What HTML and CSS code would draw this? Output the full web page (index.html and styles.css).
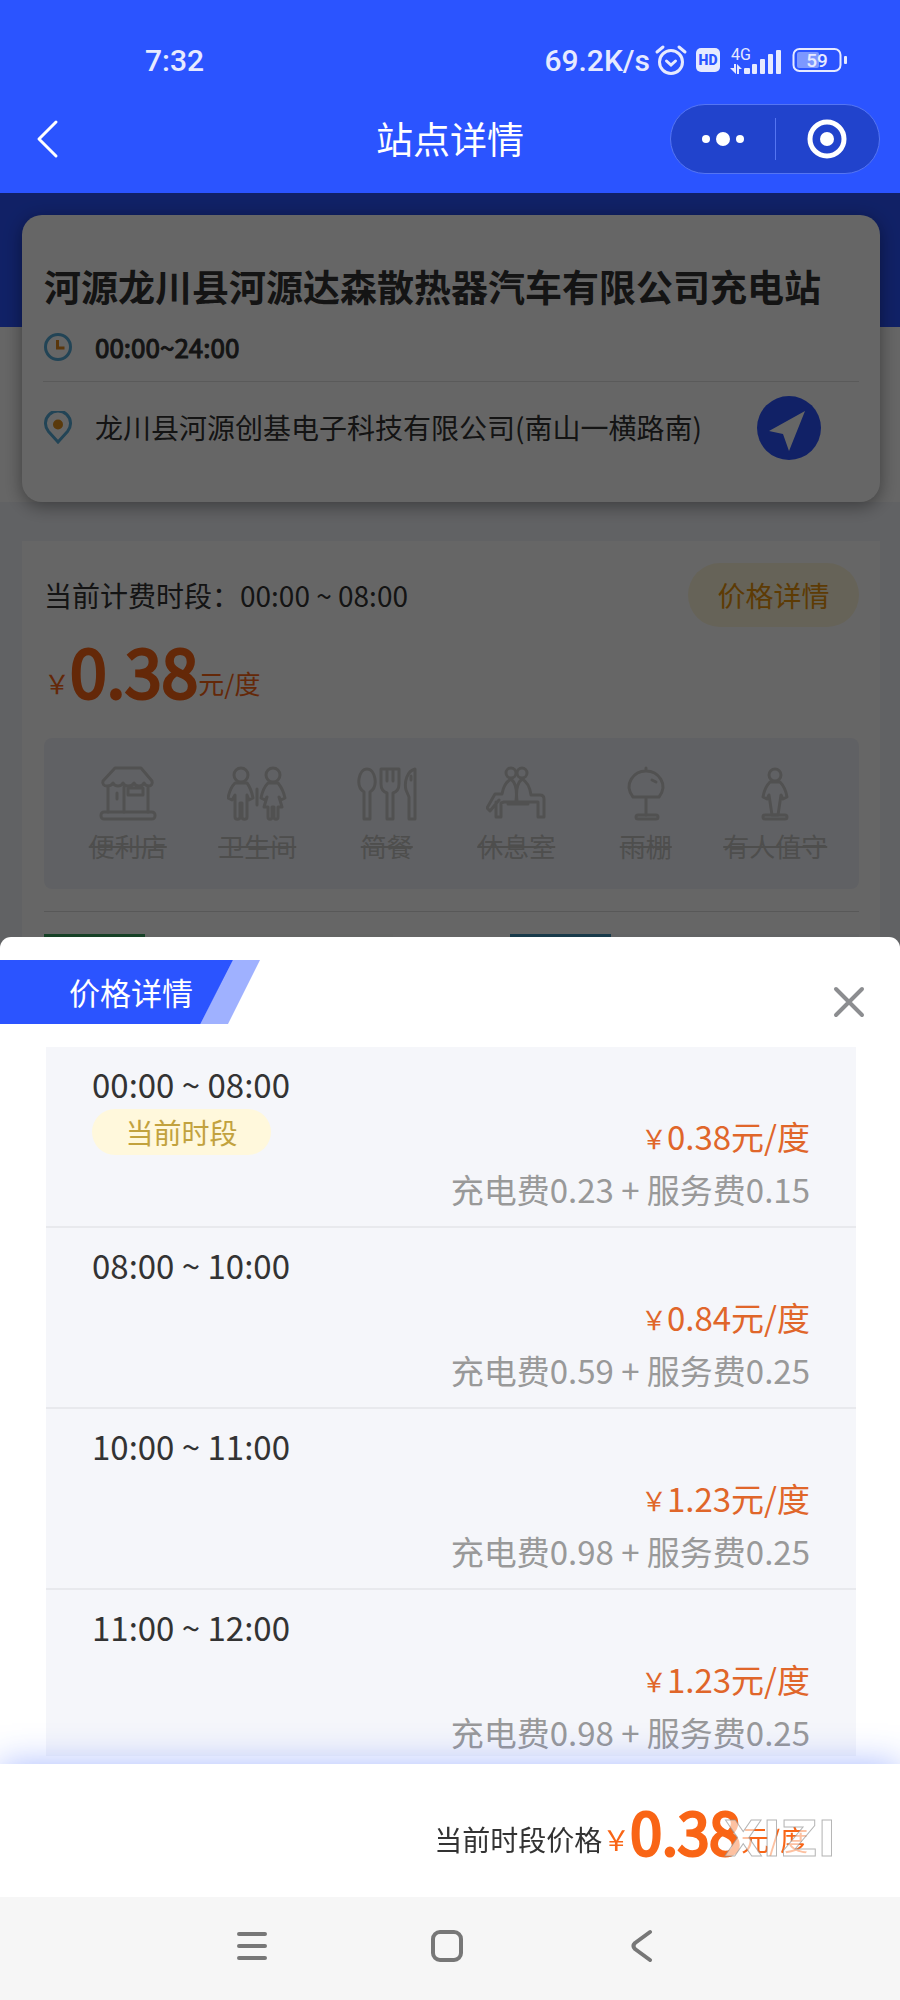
FILE: index.html
```html
<!DOCTYPE html>
<html lang="zh-CN">
<head>
    <meta charset="UTF-8">
    <meta name="viewport" content="width=device-width, initial-scale=1">
    <title>站点详情</title>
    <link rel="stylesheet" href="styles.css">
</head>
<body>

<div class="app">
    <header class="header">
        <div class="status-bar">
            <span>7:32</span>
            <div class="status-icons">
                <span>69.2K/s</span>
                <svg class="alarm" width="34" height="32" viewBox="0 0 34 32" fill="none" stroke="#e6eaff" stroke-width="3" stroke-linecap="round">
                    <circle cx="17" cy="18" r="11.500"/>
                    <path d="M12.500 17l4.500 4 4.500-4M3 8l6-5M31 8l-6-5"/>
                </svg>
                <svg class="hd" width="24" height="24" viewBox="0 0 24 24">
                    <rect width="24" height="24" rx="5" fill="#e6eaff"/>
                    <text x="12" y="17" text-anchor="middle" class="hd-text">HD</text>
                </svg>
                <svg class="signal" width="52" height="32" viewBox="0 0 52 32" fill="#e6eaff">
                    <text x="1" y="16" class="signal-text">4G</text>
                    <path d="M0 24h4v-4h2v10zM7 30V20l5 5H9v5z"/>
                    <rect x="14" y="24" width="6" height="6" rx="1"/>
                    <rect x="22" y="20" width="5" height="10" rx="1"/>
                    <rect x="30" y="15" width="5" height="15" rx="1"/>
                    <rect x="38" y="10" width="5" height="20" rx="1"/>
                    <rect x="46" y="6" width="5" height="24" rx="1"/>
                </svg>
                <svg class="battery" width="56" height="26" viewBox="0 0 56 26">
                    <rect x="5" y="5" width="22" height="16" rx="2" fill="#7d98ff"/>
                    <rect x="1.500" y="2" width="47" height="22" rx="6" fill="none" stroke="#e6eaff" stroke-width="2"/>
                    <rect x="52" y="9" width="3" height="8" rx="1" fill="#e6eaff"/>
                    <text x="25" y="20" text-anchor="middle" class="battery-text">59</text>
                </svg>
            </div>
        </div>
        <div class="title-bar">
            <button class="icon-btn back" aria-label="返回">
                <svg width="24" height="40" viewBox="0 0 24 40" fill="none" stroke="#fff" stroke-width="3" stroke-linecap="round" stroke-linejoin="round">
                    <path d="M20 3L3 20l17 17"/>
                </svg>
            </button>
            <h1>站点详情</h1>
            <div class="capsule">
                <button class="icon-btn" aria-label="更多">
                    <svg width="44" height="16" viewBox="0 0 44 16" fill="#fff">
                        <circle cx="5" cy="8" r="4"/>
                        <circle cx="22" cy="8" r="7"/>
                        <circle cx="39" cy="8" r="4"/>
                    </svg>
                </button>
                <button class="icon-btn" aria-label="关闭小程序">
                    <svg width="40" height="40" viewBox="0 0 40 40">
                        <circle cx="20" cy="20" r="17" fill="none" stroke="#fff" stroke-width="5"/>
                        <circle cx="20" cy="20" r="7" fill="#fff"/>
                    </svg>
                </button>
            </div>
        </div>
    </header>

    <main class="station">
        <section class="hero">
            <div class="station-card">
                <h2>河源龙川县河源达森散热器汽车有限公司充电站</h2>
                <div class="info-row time-row">
                    <svg width="28" height="28" viewBox="0 0 28 28" fill="none" stroke-width="3">
                        <circle cx="14" cy="14" r="12.500" stroke="#55aad6"/>
                        <path d="M13.500 7v8h7" stroke="#e08a1e"/>
                    </svg>
                    <span>00:00~24:00</span>
                </div>
                <div class="info-row address-row">
                    <svg width="28" height="34" viewBox="0 0 28 34">
                        <path d="M14 31L4.500 20.500A12.500 12.500 0 1 1 23.500 20.500z" fill="none" stroke="#55aad6" stroke-width="3"/>
                        <circle cx="14" cy="13.500" r="5" fill="#e0921e"/>
                    </svg>
                    <span>龙川县河源创基电子科技有限公司(南山一横路南)</span>
                    <button class="icon-btn navigate" aria-label="导航">
                        <svg width="64" height="64" viewBox="0 0 64 64">
                            <circle cx="32" cy="32" r="32" fill="#2b54ff"/>
                            <path d="M48 15L32 55l-6-17-14-3z" fill="#fff"/>
                        </svg>
                    </button>
                </div>
            </div>
        </section>

        <section class="price-card">
            <div class="period-row">
                <span>当前计费时段：00:00 ~ 08:00</span>
                <button class="price-btn">价格详情</button>
            </div>
            <p class="big-price"><small>￥</small><b>0.38</b><small>元/度</small></p>

            <ul class="facilities">
                <li>
                    <svg width="60" height="56" viewBox="0 0 60 56">
                        <path d="M17 2h26l11 13c1 3-1 5-3 5-3 0-4-1-5-3-1 2-3 3-5 3s-4-1-5-3c-1 2-3 3-6 3s-4-1-5-3c-1 2-3 3-5 3s-4-1-5-3c-1 2-3 3-6 3-3 0-5-2-4-5zM10 21v25M50 21v25M26 21v25M30 22h15v7H30zM19 27v6"/>
                        <rect x="3" y="46" width="54" height="7" rx="3"/>
                    </svg>
                    <del>便利店</del>
                </li>
                <li>
                    <svg width="60" height="56" viewBox="0 0 60 56">
                        <circle cx="14" cy="9" r="7"/>
                        <circle cx="46" cy="9" r="7"/>
                        <path d="M8 17h12c3 4 5 10 6 15l-4 2-2-5v22c0 3-5 3-5 0V37h-2v14c0 3-5 3-5 0V29l-3 5-4-2c1-5 3-11 7-15zM41 17h10c4 5 6 10 7 15l-4 2-2-3 3 10h-4v10c0 3-4 3-4 0V41h-2v10c0 3-4 3-4 0V41h-4l3-10-2 3-4-2c1-5 3-11 7-15zM30 23v16"/>
                    </svg>
                    <del>卫生间</del>
                </li>
                <li>
                    <svg width="60" height="56" viewBox="0 0 60 56">
                        <path d="M7 53V26C-2 20 2 3 10 3s12 17 3 23v27zM24 3v15c0 5 3 8 6 9v26h6V27c3-1 6-4 6-9V3zM30 3v12M36 3v12M58 3c-8 2-11 13-9 21l3 7v22h6zM54 10v4"/>
                    </svg>
                    <del>简餐</del>
                </li>
                <li>
                    <svg width="60" height="56" viewBox="0 0 60 56">
                        <circle cx="25" cy="7" r="5"/>
                        <circle cx="36" cy="7" r="5"/>
                        <path d="M25 13c-5 3-8 9-9 15H9L1 42l3 3 9-11M36 13c6 3 8 9 9 16h9c2 0 4 1 4 4v18h-6V36H18l-3 1v14h-5V36M25 13c6 5 6 14 5 22M36 13c-6 5-6 14-5 22M22 38h20"/>
                    </svg>
                    <del>休息室</del>
                </li>
                <li>
                    <svg width="60" height="56" viewBox="0 0 60 56">
                        <path d="M30 2v3M17 31h26c10-13-1-26-13-26S7 18 17 31zM30 31v18M36 14l4 2"/>
                        <rect x="20" y="49" width="22" height="4" rx="2"/>
                    </svg>
                    <del>雨棚</del>
                </li>
                <li>
                    <svg width="60" height="56" viewBox="0 0 60 56">
                        <circle cx="30" cy="9" r="6"/>
                        <path d="M25 16h10c4 4 6 9 7 15l-4 2-2-4-3 20h-6l-3-20-2 4-4-2c1-6 3-11 7-15z"/>
                        <rect x="18" y="49" width="24" height="4" rx="2"/>
                    </svg>
                    <del>有人值守</del>
                </li>
            </ul>

            <div class="chargers">
                <div class="charger fast"><i></i><i></i><i></i></div>
                <div class="charger slow"><i></i><i></i><i></i></div>
            </div>
        </section>
        <div class="mask"></div>
    </main>

    <section class="sheet">
        <div class="sheet-head">
            <h2 class="sheet-title">价格详情</h2>
            <button class="icon-btn close" aria-label="关闭">
                <svg width="32" height="32" viewBox="0 0 32 32" fill="none" stroke="#8c8d90" stroke-width="4" stroke-linecap="round">
                    <path d="M3 3l26 26M29 3L3 29"/>
                </svg>
            </button>
        </div>
        <ul class="price-list">
            <li>
                <div class="period">00:00 ~ 08:00<span class="badge">当前时段</span></div>
                <div class="fee"><strong><small>￥</small>0.38元/度</strong><span>充电费0.23 + 服务费0.15</span></div>
            </li>
            <li>
                <div class="period">08:00 ~ 10:00</div>
                <div class="fee"><strong><small>￥</small>0.84元/度</strong><span>充电费0.59 + 服务费0.25</span></div>
            </li>
            <li>
                <div class="period">10:00 ~ 11:00</div>
                <div class="fee"><strong><small>￥</small>1.23元/度</strong><span>充电费0.98 + 服务费0.25</span></div>
            </li>
            <li>
                <div class="period">11:00 ~ 12:00</div>
                <div class="fee"><strong><small>￥</small>1.23元/度</strong><span>充电费0.98 + 服务费0.25</span></div>
            </li>
        </ul>
    </section>

    <footer class="total-bar">
        <p>当前时段价格<small>￥</small><b>0.38</b><small>元/度</small></p>
        <span class="watermark">XIZI</span>
    </footer>

    <nav class="system-nav">
        <button class="icon-btn" aria-label="最近任务">
            <svg width="32" height="32" viewBox="0 0 32 32" stroke="#777" stroke-width="4" stroke-linecap="round">
                <path d="M3 4h26M3 16h26M3 28h26"/>
            </svg>
        </button>
        <button class="icon-btn" aria-label="主屏幕">
            <svg width="34" height="34" viewBox="0 0 34 34" fill="none" stroke="#777" stroke-width="4">
                <rect x="3" y="3" width="28" height="28" rx="7"/>
            </svg>
        </button>
        <button class="icon-btn" aria-label="系统返回">
            <svg width="24" height="34" viewBox="0 0 24 34" fill="none" stroke="#777" stroke-width="4" stroke-linecap="round" stroke-linejoin="round">
                <path d="M20 3L5 14q-3 3 0 6l15 11"/>
            </svg>
        </button>
    </nav>
</div>

</body>
</html>
```

FILE: styles.css
```css
* {
    box-sizing: border-box;
    margin: 0;
    padding: 0;
}
body {
    font-family: "Noto Sans CJK SC", sans-serif;
    font-size: 28px;
    color: #333;
    background: #f6f6f6;
}
ul {
    list-style: none;
}
svg {
    display: block;
    flex: none;
}
button {
    font: inherit;
    border: none;
    cursor: pointer;
}
.icon-btn {
    display: flex;
    align-items: center;
    justify-content: center;
    background: none;
}
.app {
    display: flex;
    flex-direction: column;
    height: 100vh;
}

/* header */
.header {
    flex: none;
    padding: 40px 20px 19px;
    background: #2b54ff;
    color: #fff;
}
.status-bar {
    display: flex;
    justify-content: space-between;
    align-items: center;
    height: 40px;
    padding: 0 32px 0 125px;
    font-family: Roboto, sans-serif;
    font-size: 30px;
    font-weight: 500;
    color: #e6eaff;
}
.status-icons {
    display: flex;
    align-items: center;
}
.alarm {
    margin: 0 8px 0 4px;
}
.signal {
    margin: 0 10px;
}
.hd-text {
    font-size: 14px;
    font-weight: 900;
    fill: #2b54ff;
}
.signal-text {
    font-size: 16px;
    font-weight: 400;
}
.battery-text {
    font-size: 19px;
    fill: #e6eaff;
}
.title-bar {
    display: grid;
    grid-template-columns: 210px 1fr 210px;
    align-items: center;
    margin-top: 24px;
}
.title-bar h1 {
    padding-bottom: 2px;
    font-size: 37px;
    font-weight: 400;
    line-height: 54px;
    text-align: center;
}
.back {
    width: 56px;
    height: 60px;
}
.capsule {
    display: flex;
    height: 70px;
    border: 1px solid #5575f2;
    border-radius: 35px;
    background: #2143cc;
}
.capsule .icon-btn {
    flex: 1;
}
.capsule .icon-btn + .icon-btn {
    margin: 13px 0;
    border-left: 1px solid #5575f2;
}

/* station page */
.station {
    position: relative;
    flex: none;
    background: #f3f5fa;
}
.mask {
    position: absolute;
    inset: 0;
    z-index: 2;
    background: rgba(0, 0, 0, 0.6);
}
.hero {
    padding: 22px 20px 0 22px;
    background: linear-gradient(#2b54ff 134px, #fff 134px);
}
.station-card {
    position: relative;
    padding: 46px 21px 28px;
    border-radius: 20px;
    background: #fff;
    box-shadow: 0 4px 18px rgba(0, 0, 0, 0.4);
}
.station-card h2 {
    padding: 0 0 2px 1px;
    font-size: 37px;
    line-height: 50px;
    white-space: nowrap;
}
.info-row {
    display: flex;
    align-items: center;
    gap: 23px;
    padding-left: 1px;
}
.info-row span {
    padding-bottom: 2px;
}
.time-row {
    height: 69px;
    border-bottom: 1px solid #e2e2e2;
    font-size: 26px;
    -webkit-text-stroke: 1px #333;
}
.address-row {
    height: 92px;
    white-space: nowrap;
}
.navigate {
    margin-left: auto;
    margin-right: 38px;
}
.price-card {
    margin: 39px 20px 0 22px;
    padding: 22px 21px 0 22px;
    background: #fff;
}
.period-row {
    display: flex;
    justify-content: space-between;
    align-items: center;
}
.price-btn {
    width: 171px;
    height: 64px;
    border-radius: 32px;
    background: #fff7dc;
    color: #e8930c;
}
.big-price {
    height: 111px;
    line-height: 84px;
    color: #f96516;
}
.big-price small {
    font-size: 26px;
}
.big-price b {
    font-size: 66px;
    font-weight: 400;
    vertical-align: -4px;
    -webkit-text-stroke: 3px #f96516;
}
.facilities {
    display: grid;
    grid-template-columns: repeat(6, 1fr);
    padding: 28px 19px 19px;
    border-radius: 8px;
    background: #f1f3fa;
}
.facilities li {
    display: flex;
    flex-direction: column;
    align-items: center;
    color: #c2c2c0;
    font-size: 26px;
    line-height: 48px;
    white-space: nowrap;
}
.facilities svg {
    fill: none;
    stroke: #cacaca;
    stroke-width: 3;
    stroke-linejoin: round;
    stroke-linecap: round;
}
.chargers {
    display: grid;
    grid-template-columns: 1fr 1fr;
    gap: 117px;
    margin-top: 22px;
    padding-top: 22px;
    border-top: 1px solid #dcdcdc;
}
.charger {
    display: grid;
    grid-template-columns: 101px 1fr 1fr;
    height: 16px;
}
.charger.fast i {
    background: #fafdfb;
}
.charger.slow i {
    background: #f8fbfd;
}
.charger.fast i:first-child {
    background: #37a35f;
}
.charger.slow i:first-child {
    background: #3d91b8;
}

/* price sheet */
.sheet {
    position: relative;
    z-index: 3;
    display: flex;
    flex-direction: column;
    flex: 1;
    min-height: 0;
    margin-top: -13px;
    padding: 23px 0 8px;
    border-radius: 11px 11px 0 0;
    background: #fff;
}
.sheet-head {
    display: flex;
    justify-content: space-between;
    align-items: flex-start;
}
.sheet-title {
    width: 260px;
    height: 64px;
    padding-left: 69px;
    background: linear-gradient(117deg, #2b54ff 207px, #9fb1ff 208px);
    clip-path: polygon(0 0, 100% 0, 228px 100%, 0 100%);
    color: #fff;
    font-size: 31px;
    font-weight: 400;
    line-height: 64px;
}
.close {
    width: 60px;
    height: 60px;
    margin: 12px 21px 0 0;
}
.price-list {
    flex: 1;
    min-height: 0;
    margin: 15px 44px 0 46px;
    overflow-y: auto;
    scrollbar-width: none;
    background: #f5f6fa;
}
.price-list li {
    display: flex;
    justify-content: space-between;
    height: 181px;
    padding: 12px 46px 0;
    border-bottom: 2px solid #e8e9ed;
    font-size: 33px;
    line-height: 50px;
}
.badge {
    display: block;
    width: 179px;
    border-radius: 23px;
    background: #fff8dc;
    color: #c2a23e;
    font-size: 28px;
    line-height: 46px;
    text-align: center;
}
.fee {
    padding-top: 51px;
    color: #999;
    text-align: right;
}
.fee strong {
    display: block;
    color: #e0662a;
    font-weight: 400;
    line-height: 52px;
}
.fee small {
    font-size: 26px;
    vertical-align: 1px;
}

/* bottom bars */
.total-bar {
    position: relative;
    z-index: 4;
    flex: none;
    height: 133px;
    padding-right: 92px;
    background: #fff;
    box-shadow: 0 0 34px rgba(43, 84, 255, 0.4);
    line-height: 133px;
    text-align: right;
}
.total-bar small {
    color: #f96516;
    font-size: 28px;
}
.total-bar b {
    color: #f96516;
    font-size: 57px;
    font-weight: 400;
    vertical-align: -4px;
    -webkit-text-stroke: 3px #f96516;
}
.watermark {
    position: absolute;
    top: 50px;
    right: 64px;
    color: rgba(255, 255, 255, 0.6);
    font-family: "DejaVu Sans", sans-serif;
    font-size: 50px;
    font-weight: 700;
    line-height: 50px;
    -webkit-text-stroke: 1px rgba(150, 150, 150, 0.7);
}
.system-nav {
    position: relative;
    z-index: 5;
    display: flex;
    flex: none;
    justify-content: center;
    gap: 135px;
    height: 103px;
    padding: 0 6px 6px 0;
    background: #f6f6f6;
}
.system-nav .icon-btn {
    width: 60px;
}
```
